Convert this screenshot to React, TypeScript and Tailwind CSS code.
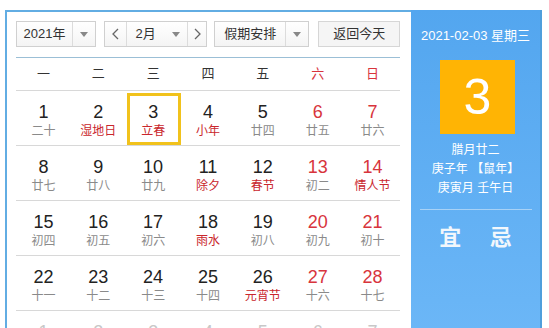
import React from 'react'

type Day = {
  n: number
  lunar: string
  festival?: boolean
  weekend?: boolean
  other?: boolean
  selected?: boolean
}

const weekdays = ['一', '二', '三', '四', '五', '六', '日']

const rows: Day[][] = [
  [
    { n: 1, lunar: '二十' },
    { n: 2, lunar: '湿地日', festival: true },
    { n: 3, lunar: '立春', festival: true, selected: true },
    { n: 4, lunar: '小年', festival: true },
    { n: 5, lunar: '廿四' },
    { n: 6, lunar: '廿五', weekend: true },
    { n: 7, lunar: '廿六', weekend: true },
  ],
  [
    { n: 8, lunar: '廿七' },
    { n: 9, lunar: '廿八' },
    { n: 10, lunar: '廿九' },
    { n: 11, lunar: '除夕', festival: true },
    { n: 12, lunar: '春节', festival: true },
    { n: 13, lunar: '初二', weekend: true },
    { n: 14, lunar: '情人节', weekend: true, festival: true },
  ],
  [
    { n: 15, lunar: '初四' },
    { n: 16, lunar: '初五' },
    { n: 17, lunar: '初六' },
    { n: 18, lunar: '雨水', festival: true },
    { n: 19, lunar: '初八' },
    { n: 20, lunar: '初九', weekend: true },
    { n: 21, lunar: '初十', weekend: true },
  ],
  [
    { n: 22, lunar: '十一' },
    { n: 23, lunar: '十二' },
    { n: 24, lunar: '十三' },
    { n: 25, lunar: '十四' },
    { n: 26, lunar: '元宵节', festival: true },
    { n: 27, lunar: '十六', weekend: true },
    { n: 28, lunar: '十七', weekend: true },
  ],
  [
    { n: 1, lunar: '十八', other: true },
    { n: 2, lunar: '十九', other: true },
    { n: 3, lunar: '二十', other: true },
    { n: 4, lunar: '廿一', other: true },
    { n: 5, lunar: '廿二', other: true },
    { n: 6, lunar: '廿三', other: true },
    { n: 7, lunar: '廿四', other: true },
  ],
]

function Caret() {
  return (
    <svg width="8" height="5" viewBox="0 0 8 5">
      <path d="M0 0 L8 0 L4 5 Z" fill="#888" />
    </svg>
  )
}

function Chevron({ dir }: { dir: 'left' | 'right' }) {
  return (
    <svg width="7" height="12" viewBox="0 0 7 12">
      <path
        d={dir === 'left' ? 'M6 1 L1 6 L6 11' : 'M1 1 L6 6 L1 11'}
        fill="none"
        stroke="#666"
        strokeWidth="1.3"
      />
    </svg>
  )
}

function Select({ label, width, labelWidth }: { label: string; width: string; labelWidth: string }) {
  return (
    <div className={`flex h-[26px] ${width} border border-[#d0d0d0] bg-gradient-to-b from-white to-[#f4f4f4]`}>
      <div className={`flex ${labelWidth} items-center justify-center border-r border-[#dcdcdc] text-[13px] text-[#333]`}>
        {label}
      </div>
      <div className="flex flex-1 items-center justify-center">
        <Caret />
      </div>
    </div>
  )
}

function DayCell({ d }: { d: Day }) {
  const numColor = d.other ? 'text-[#c8c8c8]' : d.weekend ? 'text-[#d8343c]' : 'text-[#222]'
  const lunarColor = d.other ? 'text-[#d0d0d0]' : d.festival ? 'text-[#c9262c]' : 'text-[#8a8a8a]'
  return (
    <div className="relative flex flex-col items-center pt-[11px]">
      {d.selected && (
        <div className="absolute top-[2px] right-0 bottom-0 left-[1px] border-[3px] border-[#f1c21c]" />
      )}
      <div className={`text-[18px] leading-[20px] ${numColor}`} style={{ fontFamily: '"Liberation Sans", Arial, sans-serif' }}>
        {d.n}
      </div>
      <div className={`mt-[1px] text-[12px] leading-[16px] ${lunarColor}`}>{d.lunar}</div>
    </div>
  )
}

export default function App() {
  return (
    <div
      className="h-[328px] w-[549px] overflow-hidden bg-white pt-[10px] pl-[5px]"
      style={{ fontFamily: '"Liberation Sans", "Noto Sans CJK SC", sans-serif' }}
    >
      <div className="flex h-[330px] w-[537px] border-t-2 border-l-2 border-[#62ade3]">
        {/* calendar */}
        <div className="w-[404px] pt-[9px] pr-[11px] pl-[9px]">
          <div className="flex h-[26px] items-center">
            <Select label="2021年" width="w-[80px]" labelWidth="w-[56px]" />
            <div className="ml-[8px] flex h-[26px] w-[104px] border border-[#d0d0d0] bg-gradient-to-b from-white to-[#f4f4f4]">
              <div className="flex w-[22px] items-center justify-center border-r border-[#dcdcdc]">
                <Chevron dir="left" />
              </div>
              <div className="flex w-[38px] items-center justify-center text-[13px] text-[#333]">2月</div>
              <div className="flex w-[22px] items-center justify-center">
                <Caret />
              </div>
              <div className="flex flex-1 items-center justify-center border-l border-[#dcdcdc]">
                <Chevron dir="right" />
              </div>
            </div>
            <div className="ml-[7px]">
              <Select label="假期安排" width="w-[95px]" labelWidth="w-[71px]" />
            </div>
            <div className="ml-[9px] flex h-[26px] w-[82px] items-center justify-center border border-[#d6d6d6] bg-[#f5f5f5] text-[13px] text-[#333]">
              返回今天
            </div>
          </div>

          <div className="mt-[10px] grid h-[34px] grid-cols-7 border-t border-b border-t-[#9bbfd6] border-b-[#d8d8d8]">
            {weekdays.map((w, i) => (
              <div
                key={w}
                className={`flex items-center justify-center text-[13px] ${i >= 5 ? 'text-[#d8343c]' : 'text-[#333]'}`}
              >
                {w}
              </div>
            ))}
          </div>

          {rows.map((row, ri) => (
            <div key={ri} className="grid h-[55px] grid-cols-7 border-b border-[#d8d8d8]">
              {row.map((d, i) => (
                <DayCell key={i} d={d} />
              ))}
            </div>
          ))}
        </div>

        {/* side panel */}
        <div className="-mt-[2px] flex w-[129px] flex-col items-center bg-gradient-to-b from-[#53a6ef] to-[#6cb7f7] text-white">
          <div className="mt-[17px] text-[13px] leading-[18px]">2021-02-03 星期三</div>
          <div
            className="mt-[15px] ml-[4px] flex h-[74px] w-[75px] items-center justify-center bg-[#ffb404] text-[50px] leading-none"
            style={{ fontFamily: '"Liberation Sans", Arial, sans-serif' }}
          >
            3
          </div>
          <div className="mt-[7px] text-[12px] leading-[19px]">腊月廿二</div>
          <div className="text-[12px] leading-[19px]">庚子年 【鼠年】</div>
          <div className="text-[12px] leading-[19px]">庚寅月 壬午日</div>
          <div className="mt-[11px] h-px w-[112px] bg-[#a8d2f6]" />
          <div className="mt-[15px] flex w-full justify-around px-[14px] text-[22px] font-bold leading-[26px] text-[#f2f7fc]">
            <span>宜</span>
            <span>忌</span>
          </div>
        </div>
        <div className="-mt-[2px] w-[2px] bg-[#4f9fdc]" />
      </div>
    </div>
  )
}
